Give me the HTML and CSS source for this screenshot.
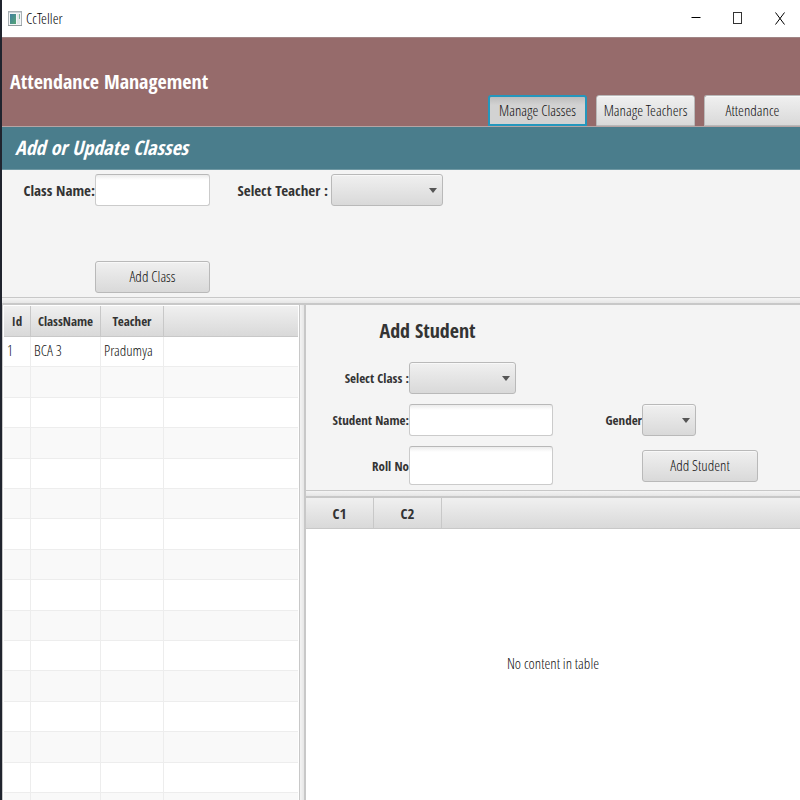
FILE: index.html
```html
<!DOCTYPE html>
<html lang="en">
<head>
<meta charset="utf-8">
<title>CcTeller</title>
<link rel="stylesheet" href="styles.css">
</head>
<body>
<div class="window">
  <header class="titlebar">
    <svg class="app-icon" width="14" height="16" viewBox="0 0 14 16" aria-hidden="true">
      <defs><linearGradient id="pane" x1="0" y1="0" x2="1" y2="1"><stop offset="0" stop-color="#3f7fa0"/><stop offset="1" stop-color="#55a575"/></linearGradient></defs>
      <rect x="0.5" y="0.5" width="13" height="14" fill="#f4f6f7" stroke="#a9b1b5"/>
      <rect x="1" y="1" width="12" height="1" fill="#cbd3d8"/>
      <rect x="2" y="3" width="6" height="10" fill="url(#pane)"/>
      <rect x="9" y="3" width="3" height="10" fill="#e3e8ea"/>
      <rect x="11" y="3" width="1" height="5" fill="#7fb59c"/>
      <rect x="0" y="14" width="14" height="1" fill="#929a9e"/>
    </svg>
    <span class="app-name">CcTeller</span>
    <div class="window-controls">
      <button type="button" aria-label="Minimize"><svg width="10" height="14" viewBox="0 0 10 14"><path d="M0.5 5.5H9.5" stroke="#000" fill="none"/></svg></button>
      <button type="button" aria-label="Maximize"><svg width="10" height="14" viewBox="0 0 10 14"><rect x="0.5" y="0.5" width="8" height="11" stroke="#333" fill="none"/></svg></button>
      <button type="button" aria-label="Close"><svg width="10" height="14" viewBox="0 0 10 14"><path d="M0.5 0.5L9.5 12.5M9.5 0.5L0.5 12.5" stroke="#000" fill="none"/></svg></button>
    </div>
  </header>

  <div class="banner">
    <h1>Attendance Management</h1>
    <nav class="tabs">
      <button type="button" class="btn tab active">Manage Classes</button>
      <button type="button" class="btn tab">Manage Teachers</button>
      <button type="button" class="btn tab">Attendance</button>
    </nav>
  </div>
  <h2 class="section-title">Add or Update Classes</h2>

  <form class="class-form">
    <label for="class-name">Class Name:</label>
    <input class="field" id="class-name" type="text">
    <label for="teacher" class="teacher-label">Select Teacher :</label>
    <span class="combo"><select id="teacher"><option></option></select></span>
    <button type="button" class="btn add-class">Add Class</button>
  </form>
  <div class="divider"></div>

  <main class="split">
    <section class="classes">
      <table class="grid">
        <colgroup><col class="col-id"><col class="col-class"><col class="col-teacher"><col></colgroup>
        <thead><tr><th>Id</th><th>ClassName</th><th>Teacher</th><th></th></tr></thead>
        <tbody>
          <tr><td>1</td><td>BCA 3</td><td>Pradumya</td><td></td></tr>
          <tr><td></td><td></td><td></td><td></td></tr>
          <tr><td></td><td></td><td></td><td></td></tr>
          <tr><td></td><td></td><td></td><td></td></tr>
          <tr><td></td><td></td><td></td><td></td></tr>
          <tr><td></td><td></td><td></td><td></td></tr>
          <tr><td></td><td></td><td></td><td></td></tr>
          <tr><td></td><td></td><td></td><td></td></tr>
          <tr><td></td><td></td><td></td><td></td></tr>
          <tr><td></td><td></td><td></td><td></td></tr>
          <tr><td></td><td></td><td></td><td></td></tr>
          <tr><td></td><td></td><td></td><td></td></tr>
          <tr><td></td><td></td><td></td><td></td></tr>
          <tr><td></td><td></td><td></td><td></td></tr>
          <tr><td></td><td></td><td></td><td></td></tr>
          <tr><td></td><td></td><td></td><td></td></tr>
        </tbody>
      </table>
    </section>
    <div class="divider vertical"></div>
    <section class="students">
      <form class="student-form">
        <h2 class="form-title">Add Student</h2>
        <label for="class" class="row-start">Select Class :</label>
        <span class="combo class-combo"><select id="class"><option></option></select></span>
        <label for="student-name" class="row-start">Student Name:</label>
        <input class="field" id="student-name" type="text">
        <label for="gender">Gender</label>
        <span class="combo gender-combo"><select id="gender"><option></option></select></span>
        <label for="roll" class="row-start">Roll No</label>
        <input class="field tall" id="roll" type="text">
        <button type="button" class="btn add-student">Add Student</button>
      </form>
      <div class="divider"></div>
      <table class="grid marks">
        <colgroup><col class="col-c"><col class="col-c"><col></colgroup>
        <thead><tr><th>C1</th><th>C2</th><th></th></tr></thead>
      </table>
      <p class="placeholder">No content in table</p>
    </section>
  </main>
</div>
</body>
</html>
```
FILE: styles.css
```css
* { box-sizing: border-box; }

body {
  margin: 0;
  font-family: "Noto Sans Condensed", "Open Sans Condensed Light", "Liberation Sans Narrow", "Noto Sans", sans-serif;
  font-size: 15px;
  line-height: 20px;
  color: #111;
}

h1, h2, p { margin: 0; }

h1, h2, th, label { font-family: "Open Sans Condensed", "Open Sans", sans-serif; font-weight: bold; color: #333; }

button, input, select { font: inherit; color: inherit; margin: 0; }

.window {
  display: flex;
  flex-direction: column;
  height: 100vh;
  overflow: hidden;
  border-left: 2px solid #20242e;
  background: #f4f4f4;
}

.titlebar {
  flex: none;
  display: flex;
  align-items: center;
  height: 38px;
  padding-left: 6px;
  background: #fff;
  border-bottom: 1px solid #a08585;
}
.app-name { margin-left: 4px; padding-bottom: 2px; color: #000; }
.window-controls { display: flex; margin-left: auto; }
.window-controls button {
  display: flex;
  align-items: center;
  justify-content: center;
  width: 42px;
  height: 36px;
  padding: 0 0 0 2px;
  border: 0;
  background: none;
}

.banner {
  flex: none;
  display: flex;
  align-items: center;
  justify-content: space-between;
  height: 89px;
  padding-left: 8px;
  background: #966b6b;
  border-bottom: 1px solid #b5a5a5;
  overflow: hidden;
}
h1 { color: #fff; font-size: 20px; line-height: 28px; }

.btn {
  height: 32px;
  padding: 0 0 2px;
  border: 1px solid #b9b9b9;
  border-radius: 3px;
  background: linear-gradient(#f0f0f0, #d9d9d9);
  box-shadow: inset 0 1px #f8f8f8;
  white-space: nowrap;
}
.tabs { display: flex; align-self: flex-end; gap: 9px; }
.tab { width: 99px; height: 31px; border-radius: 3px 3px 0 0; }
.tab:last-child { width: 96px; border-right: 0; border-radius: 3px 0 0 0; }
.tab.active {
  border: 2px solid #2497bd;
  background: linear-gradient(#bdbdbd, #d2d2d2 30%);
  box-shadow: none;
}

.section-title {
  flex: none;
  height: 43px;
  padding-left: 13px;
  background: #4a7d8c;
  border-bottom: 1px solid #6f98a3;
  color: #fff;
  font-size: 20px;
  line-height: 42px;
  font-style: italic;
}

.class-form {
  flex: none;
  display: grid;
  grid-template-columns: 93px 115px 121px 112px;
  grid-template-rows: 32px 32px;
  row-gap: 55px;
  align-items: center;
  padding: 4px 0;
}
label { text-align: right; white-space: nowrap; }
.teacher-label { padding-right: 3px; }
.add-class { grid-column: 2; }

.field {
  width: 100%;
  height: 32px;
  padding: 0 8px;
  border: 1px solid #cbcbcb;
  border-top-color: #b8b8b8;
  border-radius: 3px;
  background: linear-gradient(#ececec, #fff 5px);
}
.tall { height: 39px; }

.combo { position: relative; display: block; }
.combo select {
  display: block;
  width: 100%;
  height: 32px;
  padding: 0 8px;
  appearance: none;
  border: 1px solid #b9b9b9;
  border-radius: 3px;
  background: linear-gradient(#f0f0f0, #d9d9d9);
  box-shadow: inset 0 1px #f8f8f8;
}
.combo::after {
  content: "";
  position: absolute;
  right: 6px;
  top: 14px;
  border: 4px solid transparent;
  border-top: 5px solid #555;
  border-bottom: 0;
  pointer-events: none;
}

.divider {
  flex: none;
  height: 8px;
  border-top: 1px solid #c8c8c8;
  border-bottom: 2px solid #c8c8c8;
  background: linear-gradient(#f4f4f4, #e6e6e6);
}
.divider.vertical {
  width: 7px;
  height: auto;
  border: 0;
  border-left: 1px solid #c8c8c8;
  border-right: 2px solid #c8c8c8;
  background: linear-gradient(90deg, #f4f4f4, #e6e6e6);
}

.split { flex: 1; display: flex; min-height: 0; }
.classes { flex: 0 0 297px; padding: 1px 1px 0; overflow: hidden; background: #fff; border-left: 1px solid #c8c8c8; }
.students { flex: 1; min-width: 0; display: flex; flex-direction: column; background: #fff; }

.grid { width: 100%; table-layout: fixed; border-collapse: separate; border-spacing: 0; }
.grid th, .grid td { padding: 0; border-right: 1px solid #ededed; border-bottom: 1px solid #ededed; }
.grid th {
  height: 31px;
  border-color: #c8c8c8;
  background: linear-gradient(#f0f0f0, #d9d9d9);
  font-size: 13px;
}
.marks th { font-size: 15px; }
.grid th:last-child, .grid td:last-child { border-right: 0; }
.grid td { height: 30px; padding: 0 0 3px 3px; }
.grid tr:nth-child(even) td { background: #f9f9f9; }
.grid tr:nth-child(5n+2) td, .grid tr:nth-child(5n+4) td { height: 31px; }
.col-id { width: 27px; }
.col-class { width: 70px; }
.col-teacher { width: 63px; }
.col-c { width: 68px; }

.student-form {
  flex: none;
  display: grid;
  grid-template-columns: 103px 144px 89px 116px;
  grid-template-rows: 47px 32px 32px 39px;
  row-gap: 10px;
  align-items: center;
  padding-bottom: 5px;
  background: #f4f4f4;
}
.student-form label { font-size: 13px; }
.form-title { grid-column: 1 / 3; padding: 4px 4px 0 0; font-size: 20px; line-height: 28px; text-align: center; }
.row-start { grid-column: 1; }
.class-combo { width: 107px; }
.gender-combo { width: 54px; }
.add-student { grid-column: 4; }

.placeholder { flex: 1; display: flex; align-items: center; justify-content: center; padding-bottom: 3px; }
```
